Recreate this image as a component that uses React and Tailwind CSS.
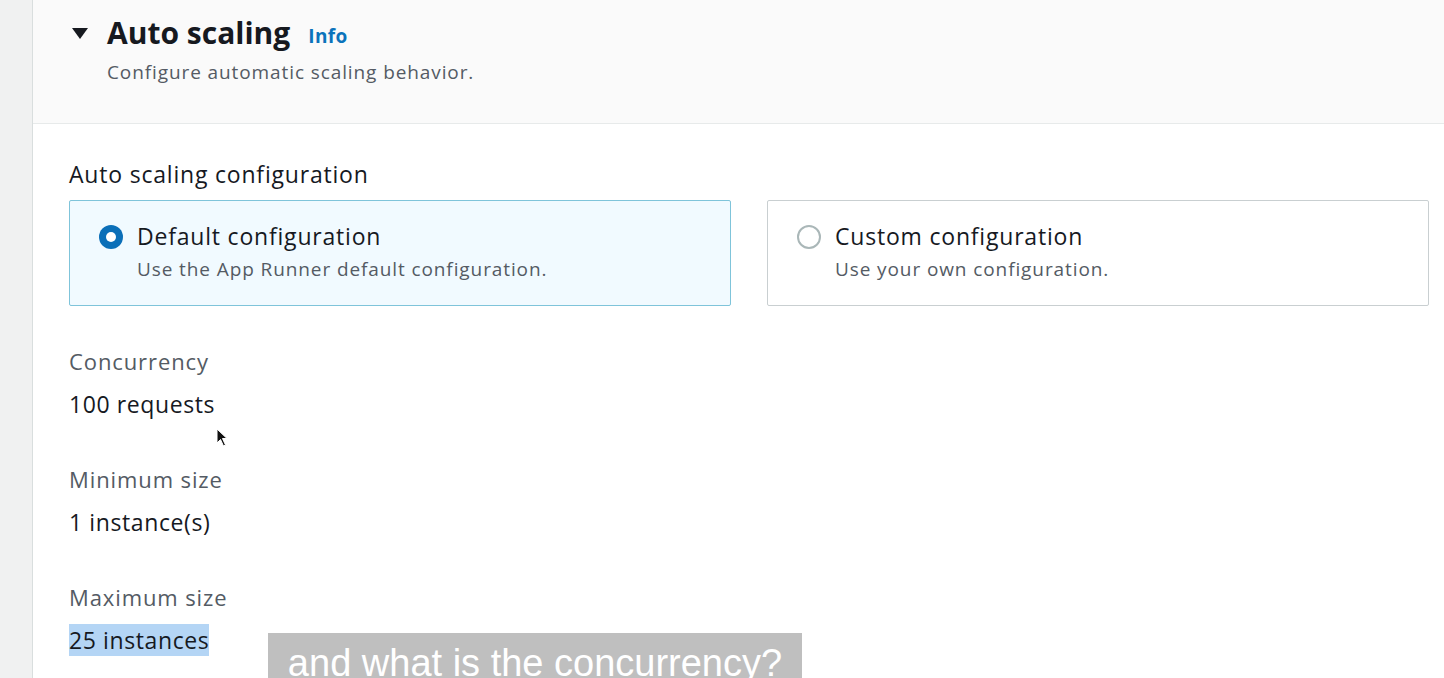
import React from "react";

const FONT = { fontFamily: '"Open Sans", "Liberation Sans", sans-serif' };

function Field({ label, value, highlight }) {
  return (
    <div className="flex flex-col">
      <div className="text-[22px] leading-[28px] tracking-[0.9px] text-[#545b64]">{label}</div>
      <div className="mt-[15px] text-[23px] leading-[28px] tracking-[0.6px] text-[#16191f]">
        <span className={highlight ? "bg-[#b4d5f5]" : ""}>{value}</span>
      </div>
    </div>
  );
}

function Option({ title, desc, selected }) {
  return (
    <div
      className={`flex-1 h-[106px] rounded-[2px] border-[1.5px] px-[29px] pt-[20px] flex gap-[14px] ${
        selected ? "border-[#7fc4da] bg-[#f1faff]" : "border-[#c9cfd1] bg-white"
      }`}
    >
      <div className="pt-[4px]">
        {selected ? (
          <div className="w-[24px] h-[24px] rounded-full bg-[#0b6fb8] flex items-center justify-center">
            <div className="w-[10px] h-[10px] rounded-full bg-white" />
          </div>
        ) : (
          <div className="w-[24px] h-[24px] rounded-full border-[2px] border-[#aab7b8] bg-white" />
        )}
      </div>
      <div className="flex flex-col">
        <div className="text-[23px] leading-[30px] tracking-[0.8px] text-[#16191f]">{title}</div>
        <div className="text-[19px] leading-[26px] tracking-[0.9px] text-[#545b64] mt-[5px]">{desc}</div>
      </div>
    </div>
  );
}

export default function App() {
  return (
    <div className="w-[1444px] h-[678px] overflow-hidden flex bg-white relative" style={FONT}>
      <div className="w-[33px] h-full bg-[#f0f1f1] border-r-[1.5px] border-[#d9dede]" />

      <div className="flex-1 flex flex-col">
        <div className="h-[124px] bg-[#fafafa] border-b border-[#e7eaea] pl-[38px] pt-[12px]">
          <div className="flex items-center">
            <svg width="18" height="14" viewBox="0 0 18 14" className="mr-[18px]">
              <path d="M1 2 H17 L9 13 Z" fill="#16191f" />
            </svg>
            <span className="text-[30px] leading-[42px] font-bold text-[#16191f]">Auto scaling</span>
            <span className="ml-[18px] mt-[6px] text-[19px] font-bold tracking-[0.4px] text-[#0b73bb]">Info</span>
          </div>
          <div className="pl-[36px] mt-[5px] text-[19px] leading-[26px] tracking-[0.9px] text-[#545b64]">
            Configure automatic scaling behavior.
          </div>
        </div>

        <div className="pl-[36px] pr-[15px] pt-[35px] flex flex-col">
          <div className="text-[23px] leading-[30px] tracking-[0.8px] text-[#16191f]">Auto scaling configuration</div>
          <div className="flex gap-[36px] mt-[11px]">
            <Option selected title="Default configuration" desc="Use the App Runner default configuration." />
            <Option title="Custom configuration" desc="Use your own configuration." />
          </div>

          <div className="mt-[41px] flex flex-col gap-[47px]">
            <Field label="Concurrency" value="100 requests" />
            <Field label="Minimum size" value="1 instance(s)" />
            <Field label="Maximum size" value="25 instances" highlight />
          </div>
        </div>
      </div>

      <svg width="14" height="20" viewBox="0 0 14 20" className="absolute left-[216px] top-[428px]">
        <path d="M1 1 L1 15 L4.5 11.5 L7.5 18 L9.5 17 L6.5 10.5 L11 10.5 Z" fill="#111" stroke="#fff" strokeWidth="1" />
      </svg>

      <div className="absolute left-[268px] top-[633px] w-[534px] h-[60px] bg-[#bfbfbf] flex justify-center">
        <span
          className="text-[38px] leading-[60px] font-light text-white"
          style={{ fontFamily: '"Liberation Sans", Arial, sans-serif' }}
        >
          and what is the concurrency?
        </span>
      </div>
    </div>
  );
}
